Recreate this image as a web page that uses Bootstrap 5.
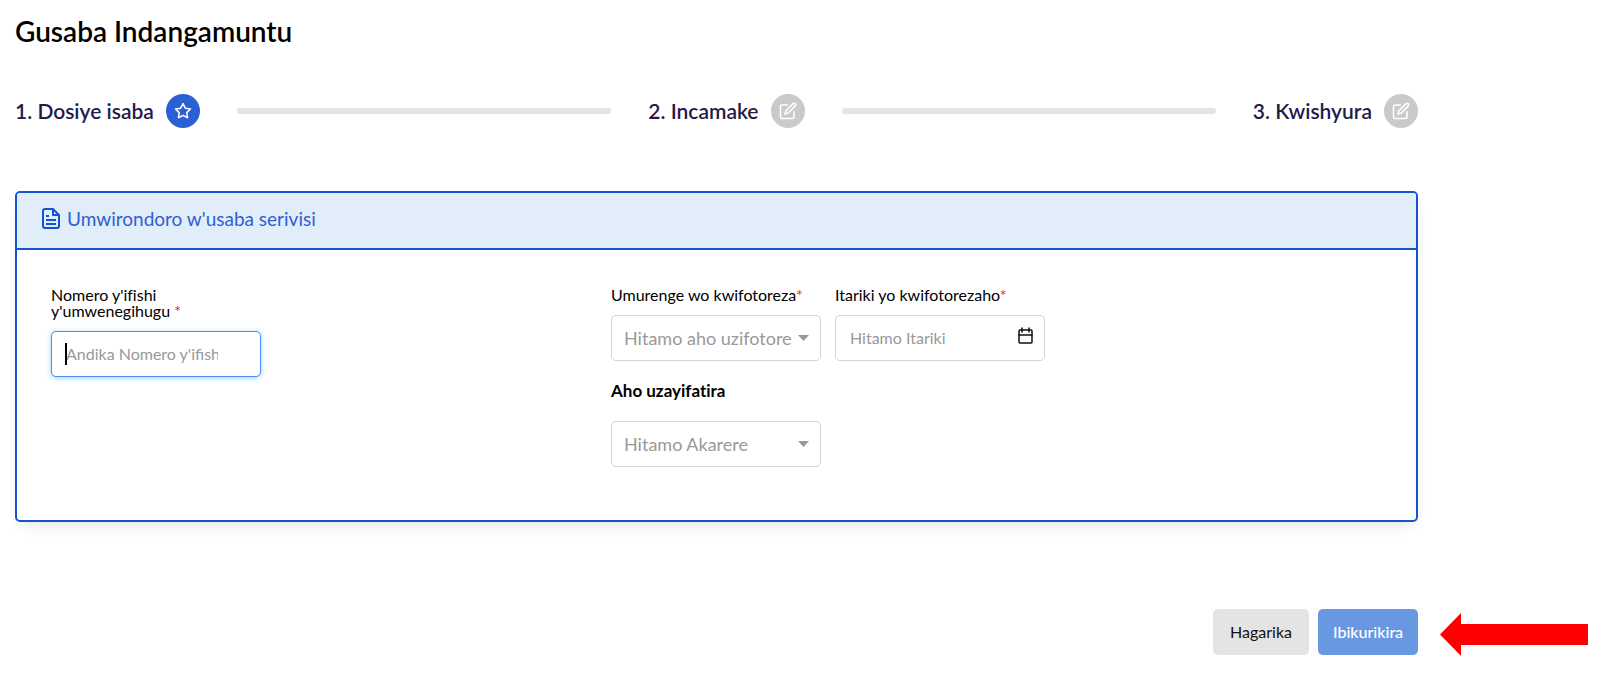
<!DOCTYPE html>
<html lang="rw">
<head>
<meta charset="utf-8">
<meta name="viewport" content="width=device-width, initial-scale=1">
<title>Gusaba Indangamuntu</title>
<link rel="stylesheet" href="https://cdn.jsdelivr.net/npm/bootstrap@5.3.0/dist/css/bootstrap.min.css">
<style>
  :root { --brand: #1554d1; --hint: #999; --side: 182px; }
  body { font-family: Lato, "Open Sans", sans-serif; font-size: 16px; color: #000; background: #fff; font-variant-ligatures: none; }
  .page { padding: 14px 0 32px 15px; }
  .page-main { margin-right: var(--side); }
  .page-title { font-size: 28px; line-height: 34px; font-weight: 600; margin-bottom: 46px; }
  .step { font-size: 21px; line-height: 34px; font-weight: 600; color: #1f1b4d; gap: 12px; }
  .step-icon { width: 34px; height: 34px; background: #cacaca; color: #fff; }
  .step.current .step-icon { background: #2b5fd4; }
  .step-line { height: 6px; background: #e4e4e4; margin: 0 37px; }
  .steps { margin-bottom: 63px; }
  .request-card { border: 2px solid var(--brand); border-radius: 5px; box-shadow: 0 8px 14px -6px rgba(0,0,0,.12); }
  .request-card .card-header { background: #e1edf9; border-bottom: 2px solid var(--brand); padding: 14px 24px 17px; font-size: 19px; line-height: 24px; color: #2f5fd0; gap: 6px; border-radius: 3px 3px 0 0; }
  .request-card .card-body { padding: 37px 35px 53px 34px; }
  .fields { --bs-gutter-x: 14px; }
  .field-label { font-size: 16px; line-height: 16px; margin-bottom: 12px; display: block; }
  .req { color: #f5222d; }
  .field { height: 46px; font-size: 16px; border: 1px solid #d0d3d9; border-radius: 5px; padding: 0 42px 2px 14px; color: #000; }
  .field::placeholder { color: var(--hint); opacity: 1; }
  .field.active-field, .field.active-field:focus { border-color: #4a8ff7; box-shadow: 0 1px 5px rgba(40,150,240,.45); }
  .caret-mark { width: 2px; height: 22px; left: 14px; top: 12px; background: #000; }
  select.field { font-size: 18px; color: var(--hint); padding: 0 28px 0 12px; background-position: right 11px center; background-size: 11px 6px;
    background-image: url("data:image/svg+xml,%3Csvg xmlns='http://www.w3.org/2000/svg' viewBox='0 0 11 6'%3E%3Cpath fill='%23999' d='M0 0h11L5.500 6z'/%3E%3C/svg%3E"); }
  .cal-btn { right: 11px; top: 12px; }
  .sub-title { font-size: 17px; line-height: 16px; font-weight: 700; margin: 6px 0 22px; }
  .actions { margin-top: 87px; }
  .actions-main { gap: 9px; }
  .act { height: 46px; padding: 0 15px; font-size: 16px; border: 0; border-radius: 5px; }
  .act-cancel { background: #e4e4e4; color: #111; width: 96px; }
  .act-next { background: #6998e2; color: #fff; font-weight: 500; width: 100px; }
  .pointer { width: var(--side); padding: 4px 12px 0 22px; }
</style>
</head>
<body>
<div class="page">
  <main class="page-main">
    <h1 class="page-title">Gusaba Indangamuntu</h1>

    <div class="steps d-flex align-items-center">
      <div class="step current d-flex align-items-center text-nowrap">1. Dosiye isaba
        <span class="step-icon rounded-circle d-flex align-items-center justify-content-center">
          <svg width="18" height="18" viewBox="0 0 24 24" fill="none" stroke="currentColor" stroke-width="2" stroke-linejoin="round"><path d="M12 2l3.090 6.260L22 9.270l-5 4.870 1.180 6.880L12 17.770l-6.180 3.250L7 14.140 2 9.270l6.910-1.010z"/></svg>
        </span>
      </div>
      <div class="step-line flex-grow-1 rounded-pill"></div>
      <div class="step d-flex align-items-center text-nowrap">2. Incamake
        <span class="step-icon rounded-circle d-flex align-items-center justify-content-center">
          <svg width="18" height="18" viewBox="0 0 24 24" fill="none" stroke="currentColor" stroke-width="2" stroke-linecap="round" stroke-linejoin="round"><path d="M11 4H4a2 2 0 0 0-2 2v14a2 2 0 0 0 2 2h14a2 2 0 0 0 2-2v-7"/><path d="M18.500 2.500a2.120 2.120 0 0 1 3 3L12 15l-4 1 1-4z"/></svg>
        </span>
      </div>
      <div class="step-line flex-grow-1 rounded-pill"></div>
      <div class="step d-flex align-items-center text-nowrap">3. Kwishyura
        <span class="step-icon rounded-circle d-flex align-items-center justify-content-center">
          <svg width="18" height="18" viewBox="0 0 24 24" fill="none" stroke="currentColor" stroke-width="2" stroke-linecap="round" stroke-linejoin="round"><path d="M11 4H4a2 2 0 0 0-2 2v14a2 2 0 0 0 2 2h14a2 2 0 0 0 2-2v-7"/><path d="M18.500 2.500a2.120 2.120 0 0 1 3 3L12 15l-4 1 1-4z"/></svg>
        </span>
      </div>
    </div>

    <form id="request" class="card request-card">
      <div class="card-header d-flex align-items-center">
        <svg width="20" height="22" viewBox="0 0 20 22" fill="none" stroke="#1554d1" stroke-width="2" stroke-linejoin="round"><path d="M12 1H4a2 2 0 0 0-2 2v15a2 2 0 0 0 2 2h12a2 2 0 0 0 2-2V7z"/><path d="M12 1v6h6" /><path d="M5 8h3M5 12h10M5 16h10"/></svg>
        <span>Umwirondoro w'usaba serivisi</span>
      </div>
      <div class="card-body">
        <div class="row fields">
          <div class="col-2">
            <label class="field-label" for="formNo">Nomero y'ifishi<br>y'umwenegihugu <span class="req">*</span></label>
            <div class="position-relative">
              <input id="formNo" type="text" class="form-control field active-field" placeholder="Andika Nomero y'ifishi">
              <span class="caret-mark position-absolute"></span>
            </div>
          </div>
          <div class="col-2 offset-3">
            <label class="field-label text-nowrap" for="sector">Umurenge wo kwifotoreza<span class="req">*</span></label>
            <select id="sector" class="form-select field"><option>Hitamo aho uzifotoreza</option></select>
          </div>
          <div class="col-2">
            <label class="field-label text-nowrap" for="photoDate">Itariki yo kwifotorezaho<span class="req">*</span></label>
            <div class="position-relative">
              <input id="photoDate" type="text" class="form-control field" placeholder="Hitamo Itariki">
              <button type="button" class="cal-btn btn p-0 border-0 position-absolute d-flex" aria-label="Itariki">
                <svg width="17" height="18" viewBox="0 0 17 18" fill="none" stroke="#111" stroke-width="1.500" stroke-linecap="round"><rect x="2" y="3" width="13" height="13" rx="1"/><path d="M2 8h13M5 1v4M12 1v4"/></svg>
              </button>
            </div>
          </div>
        </div>
        <div class="row fields">
          <div class="col-2 offset-5">
            <label class="sub-title d-block" for="district">Aho uzayifatira</label>
            <select id="district" class="form-select field"><option>Hitamo Akarere</option></select>
          </div>
        </div>
      </div>
    </form>
  </main>

  <div class="actions d-flex">
    <div class="actions-main d-flex flex-grow-1 justify-content-end">
      <button type="button" class="btn act act-cancel">Hagarika</button>
      <button type="submit" form="request" class="btn act act-next">Ibikurikira</button>
    </div>
    <div class="pointer">
      <svg class="d-block" width="148" height="43" viewBox="0 0 148 43"><path fill="#f00" d="M0 21.500L21 0v11h127v21H21v11z"/></svg>
    </div>
  </div>
</div>
<script src="https://cdn.jsdelivr.net/npm/bootstrap@5.3.0/dist/js/bootstrap.bundle.min.js"></script>
</body>
</html>
